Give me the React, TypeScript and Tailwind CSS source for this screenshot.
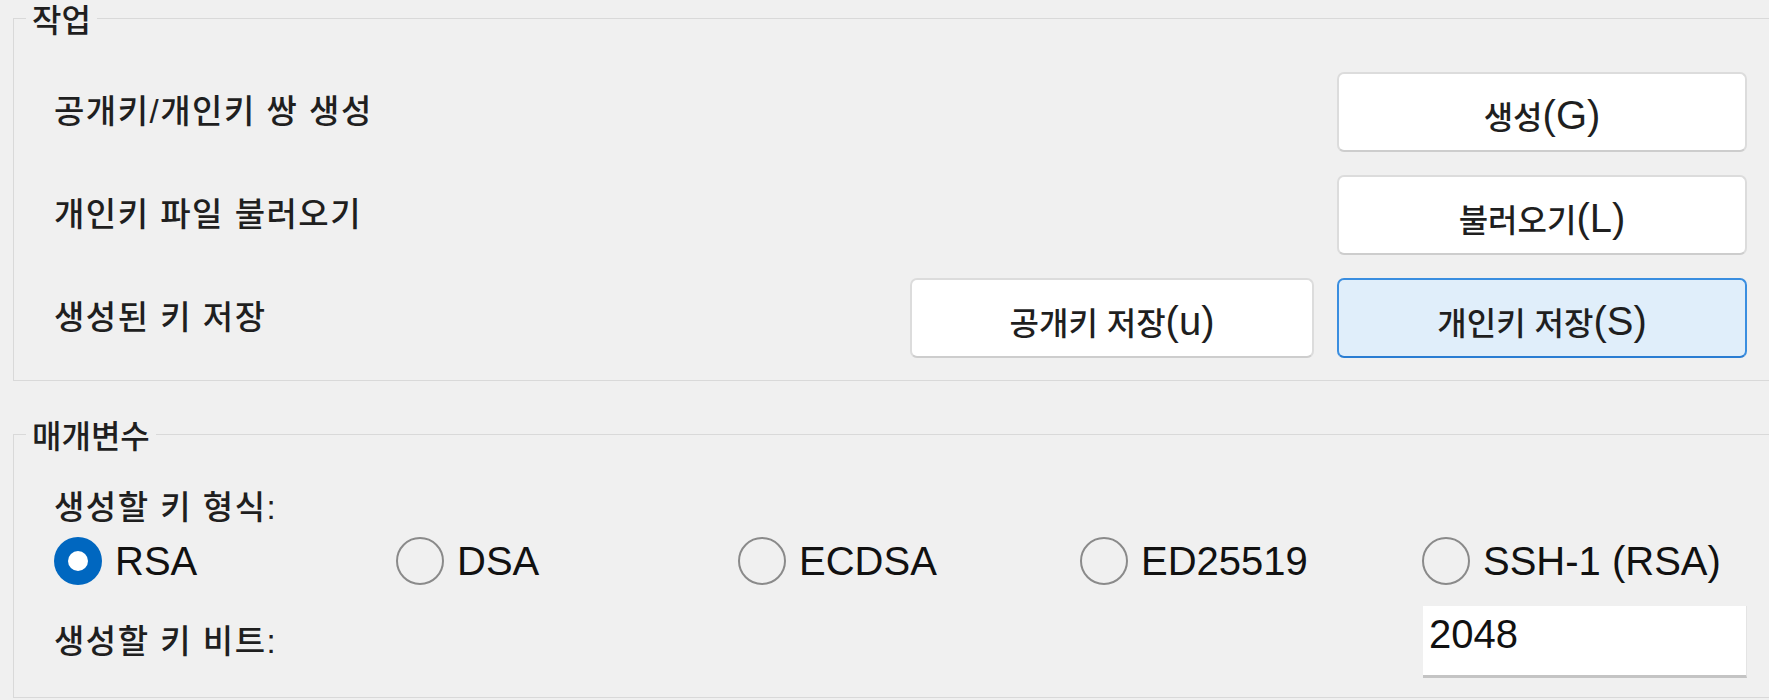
import React from 'react';

const KR = 'text-[33px] leading-[36px] tracking-[1.5px] font-medium';

const Key = ({ label, accel }: { label: string; accel: string }) => (
  <span className="whitespace-nowrap">
    <span className="text-[32px] font-medium">{label}</span>
    <span className="text-[40px]">({accel})</span>
  </span>
);

const Button = ({
  label,
  accel,
  width,
  isDefault = false,
}: {
  label: string;
  accel: string;
  width: string;
  isDefault?: boolean;
}) => (
  <button
    className={`${width} h-[80px] rounded-[7px] flex items-center justify-center pt-[6px] leading-none ${
      isDefault
        ? 'bg-[#e0eefa] border-2 border-[#3a8ee0] border-b-[#2a7dd2]'
        : 'bg-white border-2 border-[#dcdcdc] border-b-[#cdcdcd]'
    }`}
  >
    <Key label={label} accel={accel} />
  </button>
);

const Radio = ({ label, checked = false }: { label: string; checked?: boolean }) => (
  <label className="flex items-center gap-[13px] h-[48px]">
    {checked ? (
      <span className="w-[48px] h-[48px] rounded-full bg-[#0067c0] flex items-center justify-center shrink-0">
        <span className="w-[20px] h-[20px] rounded-full bg-white" />
      </span>
    ) : (
      <span className="w-[48px] h-[48px] rounded-full border-2 border-[#8a8a8a] shrink-0" />
    )}
    <span className="text-[40px] leading-none text-[#111]">{label}</span>
  </label>
);

export default function App() {
  return (
    <div className="w-full h-[700px] overflow-hidden bg-[#f0f0f0] text-[#1f1f1f] font-['Liberation_Sans','Noto_Sans_CJK_KR',sans-serif]">
      {/* 작업 */}
      <fieldset className="min-w-0 ml-[13px] border-l border-t border-b border-[#d9d9d9]">
        <legend className="ml-[12px] px-[6px] pt-[6px] text-[32px] leading-[30px] font-medium">작업</legend>
        <div className="pl-[40px] pr-[22px] pt-[36px] pb-[22px] flex flex-col gap-[23px]">
          <div className="h-[80px] flex items-center">
            <span className={`${KR} flex-1`}>공개키/개인키 쌍 생성</span>
            <Button label="생성" accel="G" width="w-[410px]" />
          </div>
          <div className="h-[80px] flex items-center">
            <span className={`${KR} flex-1`}>개인키 파일 불러오기</span>
            <Button label="불러오기" accel="L" width="w-[410px]" />
          </div>
          <div className="h-[80px] flex items-center gap-[23px]">
            <span className={`${KR} flex-1`}>생성된 키 저장</span>
            <Button label="공개키 저장" accel="u" width="w-[404px]" />
            <Button label="개인키 저장" accel="S" width="w-[410px]" isDefault />
          </div>
        </div>
      </fieldset>

      {/* 매개변수 */}
      <fieldset className="min-w-0 mt-[35px] ml-[13px] border-l border-t border-b border-[#d9d9d9]">
        <legend className="ml-[12px] px-[6px] pt-[6px] text-[32px] leading-[30px] font-medium">매개변수</legend>
        <div className="pl-[40px] pr-[22px] pt-[38px] pb-[19px] flex flex-col">
          <span className={KR}>생성할 키 형식:</span>
          <div className="mt-[11px] w-[1710px] grid grid-cols-5">
            <Radio label="RSA" checked />
            <Radio label="DSA" />
            <Radio label="ECDSA" />
            <Radio label="ED25519" />
            <Radio label="SSH-1 (RSA)" />
          </div>
          <div className="mt-[21px] h-[72px] flex items-center">
            <span className={`${KR} flex-1`}>생성할 키 비트:</span>
            <input
              readOnly
              value="2048"
              className="w-[324px] h-[72px] shrink-0 bg-white border-b-[3px] border-b-[#c4c4c4] border-r border-r-[#e4e4e4] pl-[6px] pb-[12px] text-[40px] text-[#111] outline-none"
            />
          </div>
        </div>
      </fieldset>
    </div>
  );
}
